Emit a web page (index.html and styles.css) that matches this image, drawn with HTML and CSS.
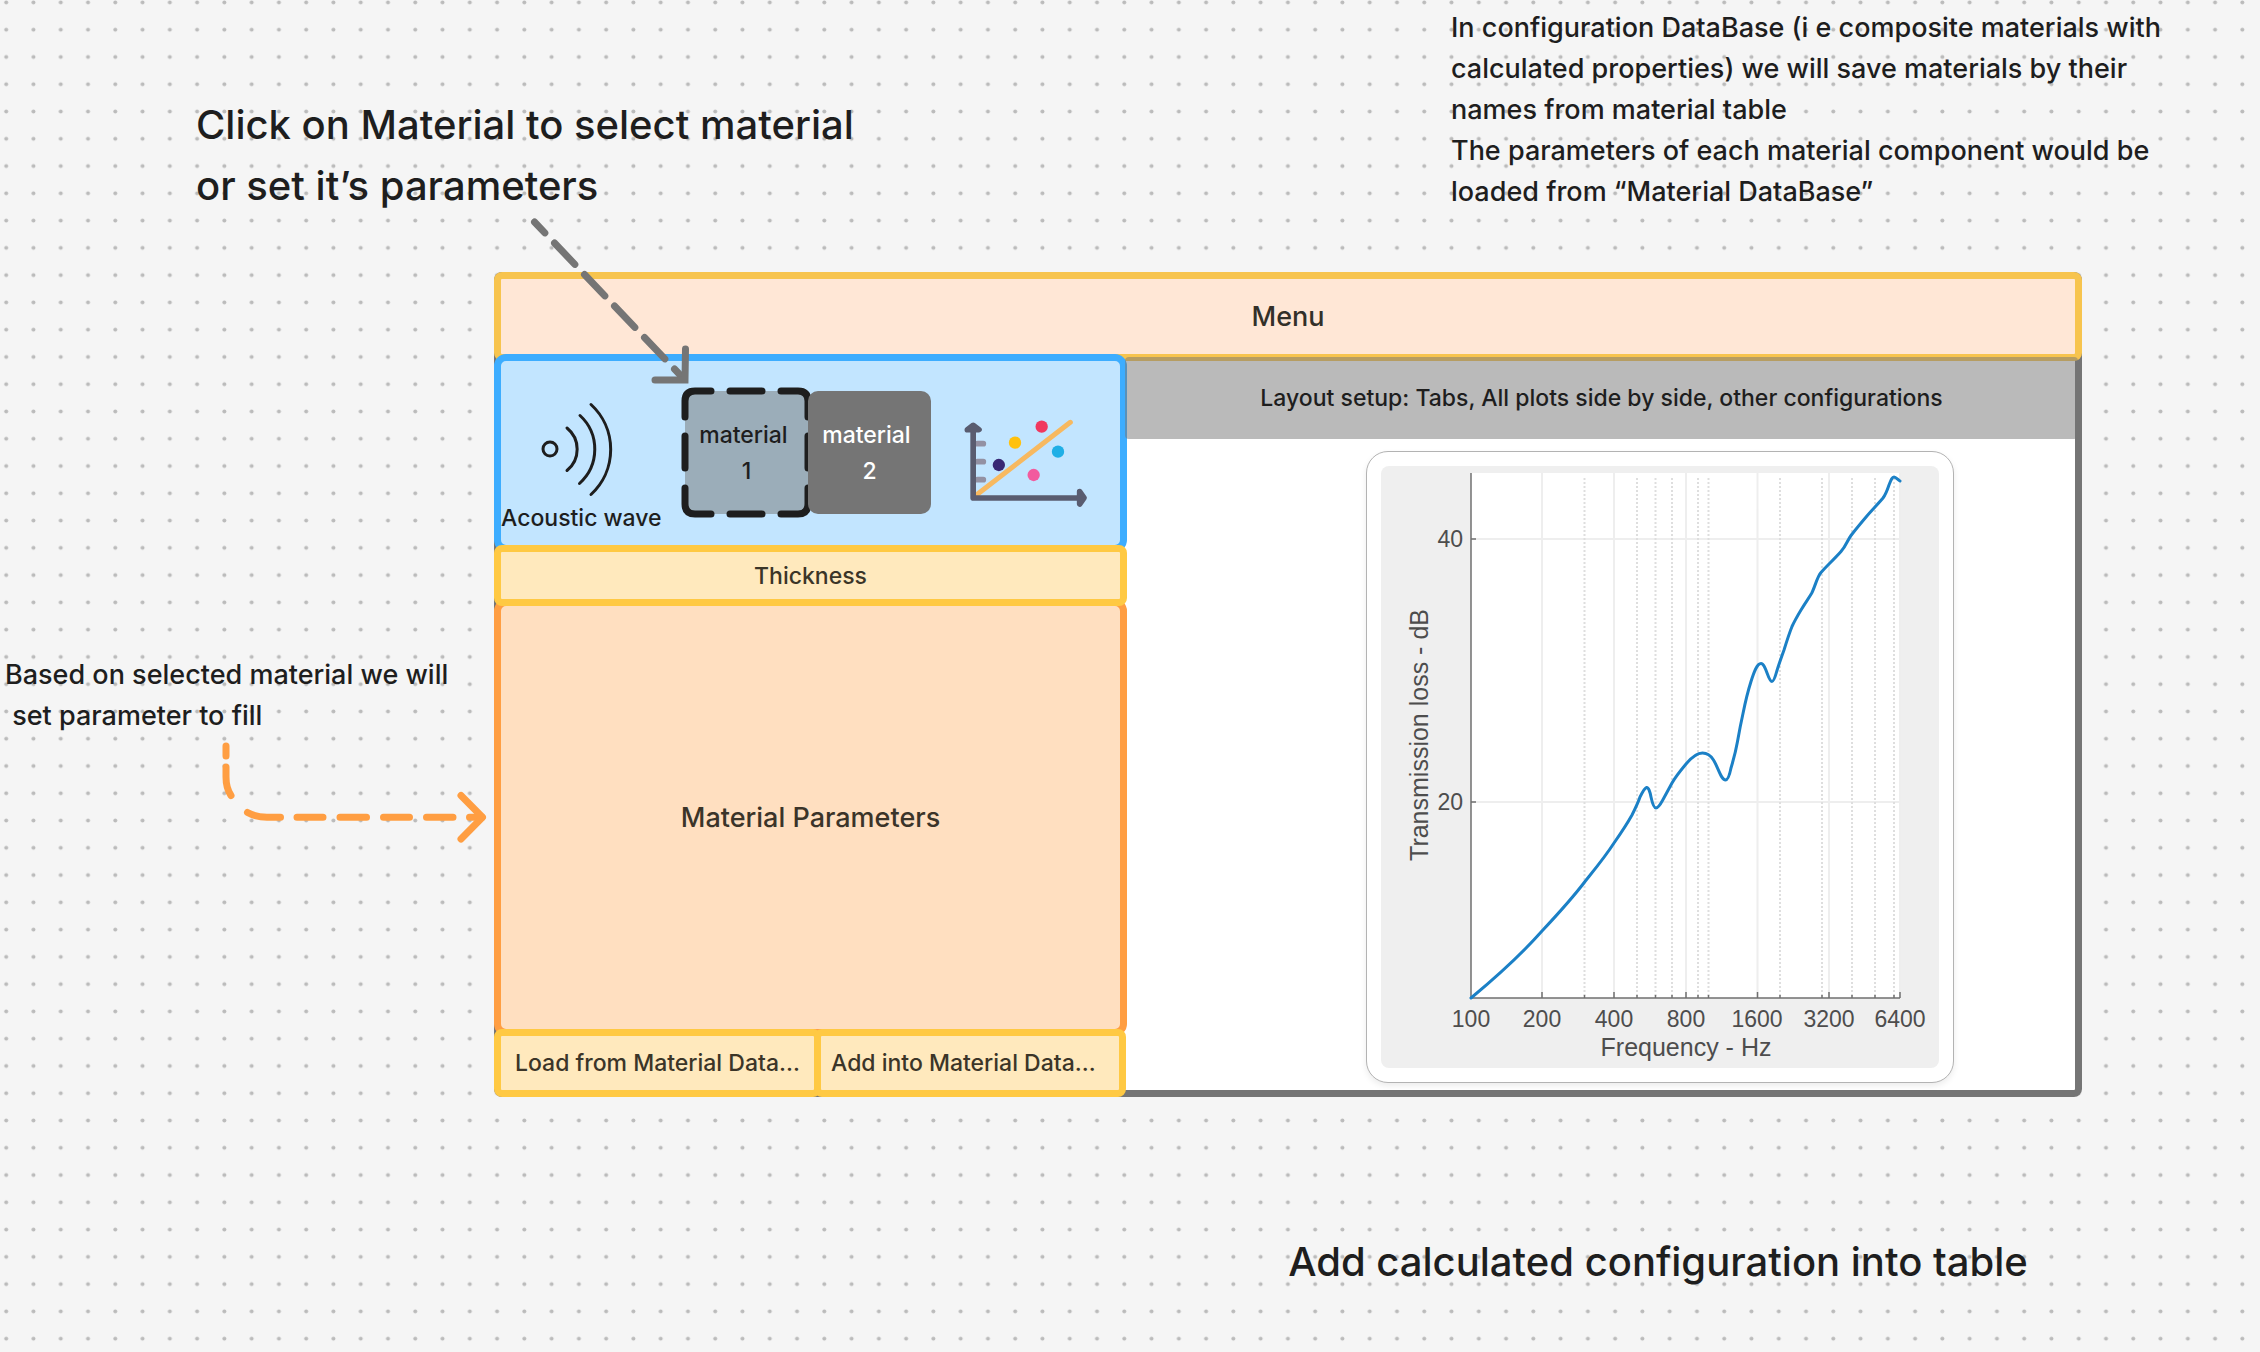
FILE: index.html
```html
<!DOCTYPE html>
<html lang="en">
<head>
<meta charset="utf-8">
<title>Material configuration board</title>
<link rel="stylesheet" href="styles.css">
</head>
<body>
<main class="board">
  <svg class="dots" aria-hidden="true">
    <defs>
      <pattern id="dot-grid" width="27.27" height="27.27" patternUnits="userSpaceOnUse">
        <circle cx="6.2" cy="2.4" r="2" fill="#bbbbbb"/>
      </pattern>
    </defs>
    <rect width="100%" height="100%" fill="url(#dot-grid)"/>
  </svg>

  <header class="notes">
    <p class="note note-large note-click">Click on Material to select material<br>or set it’s parameters</p>
    <p class="note note-config">In configuration DataBase (i e composite materials with<br>calculated properties) we will save materials by their<br>names from material table<br>The parameters of each material component would be<br>loaded from “Material DataBase”</p>
  </header>

  <div class="stage">
    <p class="note note-based">Based on selected material we will<br>&nbsp;set parameter to fill</p>

    <section class="frame">
      <nav class="menu">Menu</nav>
      <div class="body">
        <div class="sidebar">
          <div class="scene">
            <div class="wave">
              <svg class="wave-icon" viewBox="541 401 74 99" fill="none" stroke="#1e1e1e" stroke-width="3" stroke-linecap="round" aria-hidden="true">
                <circle cx="550" cy="449" r="7"/>
                <path d="M567 428A27.3 27.3 0 0 1 567 470.500M580 415.500A46 46 0 0 1 579.500 483.500M591 404.500A61.300 61.300 0 0 1 591 494.500"/>
              </svg>
              <span class="wave-label">Acoustic wave</span>
            </div>
            <div class="materials">
              <button class="material material-selected" type="button">
                <svg class="dashes" viewBox="-4 -4 131 131" fill="none" stroke="#1e1e1e" stroke-width="7" stroke-linecap="round" aria-hidden="true">
                  <path d="M0 26V10Q0 0 10 0H26M45 0H77M96 0H113Q123 0 123 10V26M123 45V77M123 97V113Q123 123 113 123H96M77 123H45M26 123H10Q0 123 0 113V97M0 77V45"/>
                </svg>
                material&nbsp;<br>1
              </button>
              <button class="material material-plain" type="button">material&nbsp;<br>2</button>
            </div>
            <svg class="scatter-icon" viewBox="69 114 381 270" fill="none" stroke-linecap="round" stroke-linejoin="round" aria-hidden="true">
              <path d="M112 191H130M112 245H130M112 299H130" stroke="#9391a3" stroke-width="17"/>
              <path d="M112 343L391 127" stroke="#f7b960" stroke-width="15"/>
              <g stroke="#595c70" stroke-width="17">
                <path d="M99.500 142V354H424"/>
                <path d="M82 149L99.500 136L117 149ZM419 335L432 353.500L419 372Z" fill="#595c70"/>
              </g>
              <circle cx="176.500" cy="255" r="18.500" fill="#392874"/>
              <circle cx="225" cy="188" r="18.500" fill="#ffc10e"/>
              <circle cx="305" cy="140" r="18.500" fill="#f0385f"/>
              <circle cx="354" cy="215" r="18.500" fill="#1fafe6"/>
              <circle cx="281" cy="285" r="18.500" fill="#f25b9e"/>
            </svg>
          </div>
          <div class="thickness">Thickness</div>
          <div class="parameters">Material Parameters</div>
          <div class="actions">
            <button class="action action-load" type="button">Load from Material Data…</button>
            <button class="action action-add" type="button">Add into Material Data…</button>
          </div>
        </div>

        <div class="output">
          <div class="layout-bar">Layout setup: Tabs, All plots side by side, other configurations</div>
          <figure class="card">
            <svg class="plot" viewBox="0 0 558 602" role="img" aria-label="Transmission loss against frequency">
              <rect x="90" y="7" width="429" height="525" fill="#ffffff"/>
              <path d="M161 7V532M233 7V532M305 7V532M376.500 7V532M448 7V532M519 7V532M90 73H519M90 336H519" stroke="#eeeeee" stroke-width="2"/>
              <path d="M203.500 12V532M256 12V532M274.500 12V532M291 12V532M317 12V532M327.500 12V532M399 12V532M441 12V532M471 12V532M494 12V532M513 12V532" stroke="#dedede" stroke-width="2" stroke-dasharray="2 2"/>
              <path d="M90 7V532H519M90 73h5M90 336h5M161 532v-6M233 532v-6M305 532v-6M376.500 532v-6M448 532v-6M519 532v-6M203.500 532v-3M256 532v-3M274.500 532v-3M291 532v-3M317 532v-3M327.500 532v-3M399 532v-3M441 532v-3M471 532v-3M494 532v-3M513 532v-3" fill="none" stroke="#707070" stroke-width="1.500"/>
              <path d="M90 532C114 512 138 491 161 465C176 449 190 434 204 415.500C214 403 224 391 233 377C240 367 246 358 251 349C254 343 257 337 259 331C262 325 263.500 322 265.500 321.500C267.500 321 269 326 270 331C271.500 338 273 342 275 342C277 342 279 339 281.500 334.500C284.500 329 288 322.500 291 317C295 310 300 304 305 298C310 292 316 287 321.500 287C326 287 330 290 332.500 294C337 301 340 314 344.500 314C347 314 349 307 350 302C353 292 355 284 356.500 275.500C358 267 360 256.500 362 247.500C364.500 235 367 225 370 215.500C373 206 376 197.500 380 197.500C385 197.500 387 215.500 391 215.500C393 215.500 395 208 396 204.500C398 198 400.500 191 403 184C405.500 176 408 168 411 160.500C414 154 417 149 420 144C424 137.500 427.500 132.500 430.500 127.500C434 121 436 111 440 106.500C443 103 446 100 448.500 97.500C452.500 93.500 456.500 89.500 460 85.500C465 80 466 75 470 69.500C475 63 480 57 485.500 50.500C491 44 497 38 502 32C505 28 507 22 508 19C510 14 511 11 513 11C515 11 517 14 519 15" fill="none" stroke="#1b80c6" stroke-width="3" stroke-linecap="round"/>
              <g class="plot-text">
                <text x="82" y="81" text-anchor="end">40</text>
                <text x="82" y="344" text-anchor="end">20</text>
                <g text-anchor="middle">
                  <text x="90" y="561">100</text>
                  <text x="161" y="561">200</text>
                  <text x="233" y="561">400</text>
                  <text x="305" y="561">800</text>
                  <text x="376" y="561">1600</text>
                  <text x="448" y="561">3200</text>
                  <text x="519" y="561">6400</text>
                  <text class="axis-title" x="305" y="590">Frequency - Hz</text>
                  <text class="axis-title" transform="translate(47 269) rotate(-90)">Transmission loss - dB</text>
                </g>
              </g>
            </svg>
          </figure>
        </div>
      </div>
    </section>
  </div>

  <p class="note note-large note-add">Add calculated configuration into table</p>

  <svg class="arrow arrow-select" viewBox="524 212 170 178" fill="none" stroke="#757575" stroke-width="7" stroke-linecap="round" aria-hidden="true">
    <path d="M534.500 222L684 379" stroke-dasharray="29.500 14" stroke-dashoffset="14.500"/>
    <path d="M685.500 349L685 380L655 380"/>
  </svg>
  <svg class="arrow arrow-fill" viewBox="216 736 276 110" fill="none" stroke="#ff9e42" stroke-width="7" stroke-linecap="round" stroke-linejoin="round" aria-hidden="true">
    <path d="M226 746V756M226 767V777Q226 788 231 795.500M247.500 812.500Q256 817.300 267 817.300H280.500M297 817.300H323M340 817.300H366.500M383.500 817.300H409.500M426.500 817.300H453M469.500 817.300H482"/>
    <path d="M461 795.500L482.500 817.300L461 839"/>
  </svg>
</main>
</body>
</html>
```
FILE: styles.css
```css
* {
  box-sizing: border-box;
}

body {
  margin: 0;
  background: #f5f5f5;
  color: #1e1e1e;
  font-family: Inter, "Liberation Sans", sans-serif;
  font-size: 23px;
  font-weight: 500;
  line-height: 36px;
}

button {
  border: 0;
  font: inherit;
  color: inherit;
  cursor: pointer;
}

.board {
  position: relative;
  min-height: 100vh;
  overflow: hidden;
}

.dots {
  position: absolute;
  inset: 0;
  width: 100%;
  height: 100%;
}

/* Notes */

.note {
  position: relative;
  margin: 0;
  font-size: 27px;
  line-height: 41px;
  white-space: nowrap;
}

.note-large {
  font-size: 40px;
  line-height: 61px;
}

.notes {
  display: flex;
  justify-content: space-between;
  padding: 7px 89px 56px 196px;
}

.note-click {
  margin-top: 87px;
}

.note-config {
  width: 720px;
}

.note-based {
  padding: 382px 0 0 5px;
}

.note-add {
  padding: 134px 0 60px 57%;
}

/* Wireframe */

.stage {
  display: grid;
  grid-template-columns: 494px minmax(0, 1fr);
  padding-right: 178px;
}

.frame {
  position: relative;
  border-radius: 8px;
  background: #ffffff;
  box-shadow: inset 0 0 0 7px #757575;
}

.menu {
  display: flex;
  align-items: center;
  justify-content: center;
  height: 89px;
  border: 7px solid #f7c44e;
  border-radius: 8px;
  background: #ffe7d6;
  color: #333029;
  font-size: 27px;
}

.body {
  display: flex;
  margin-top: -7px;
}

.sidebar {
  display: flex;
  flex: none;
  flex-direction: column;
  width: 633px;
}

.scene {
  display: flex;
  align-items: flex-start;
  height: 198px;
  border: 7px solid #3dadff;
  border-radius: 12px;
  background: #c2e5ff;
}

.wave {
  width: 184px;
  padding-top: 40px;
}

.wave-icon {
  display: block;
  width: 74px;
  height: 99px;
  margin-left: 40px;
}

.wave-label {
  display: block;
  white-space: nowrap;
}

.materials {
  display: flex;
  margin-top: 30px;
}

.material {
  position: relative;
  width: 123px;
  height: 123px;
  padding: 0;
  border-radius: 10px;
}

.material-selected {
  background: #9badb9;
}

.material-plain {
  background: #757575;
  color: #ffffff;
}

.dashes {
  position: absolute;
  top: -4px;
  left: -4px;
  width: 131px;
  height: 131px;
}

.scatter-icon {
  width: 127px;
  height: 90px;
  margin: 57px 0 0 32px;
}

.thickness {
  position: relative;
  z-index: 1;
  display: flex;
  align-items: center;
  justify-content: center;
  height: 61px;
  margin-top: -7px;
  border: 7px solid #ffc943;
  border-radius: 8px;
  background: #ffe9bd;
  color: #3b3528;
}

.parameters {
  display: flex;
  align-items: center;
  justify-content: center;
  height: 437px;
  margin-top: -7px;
  border: 7px solid #ff9e42;
  border-radius: 12px;
  background: #ffdfc0;
  color: #3b3429;
  font-size: 27px;
}

.actions {
  position: relative;
  display: flex;
  margin-top: -7px;
}

.action {
  height: 68px;
  padding: 0 0 0 14px;
  border: 7px solid #ffc943;
  border-radius: 8px;
  background: #ffe9bd;
  color: #3b3528;
  text-align: left;
  white-space: nowrap;
}

.action-load {
  width: 327px;
}

.action-add {
  width: 312px;
  margin-left: -7px;
  padding-left: 10px;
}

.output {
  position: relative;
  flex: 1;
  min-width: 0;
  padding-top: 3px;
}

.layout-bar {
  display: flex;
  align-items: center;
  justify-content: center;
  height: 82px;
  margin: 0 4px 0 -2px;
  border-radius: 4px;
  background: rgba(117, 117, 117, 0.5);
}

.card {
  width: 588px;
  margin: 12px 128px 0 auto;
  padding: 14px;
  border: 1px solid #b3b3b3;
  border-radius: 22px;
  background: #ffffff;
  box-shadow: 0 3px 6px rgba(0, 0, 0, 0.08);
}

.plot {
  display: block;
  width: 100%;
  border-radius: 8px;
  background: #efefef;
}

.plot-text {
  fill: #4d4d4d;
  font-family: "Liberation Sans", Arial, sans-serif;
  font-size: 23px;
  font-weight: 400;
}

.axis-title {
  font-size: 25px;
}

/* Connectors drawn over the board */

.arrow {
  position: absolute;
  pointer-events: none;
}

.arrow-select {
  top: 212px;
  left: 524px;
  width: 170px;
  height: 178px;
}

.arrow-fill {
  top: 736px;
  left: 216px;
  width: 276px;
  height: 110px;
}
```
